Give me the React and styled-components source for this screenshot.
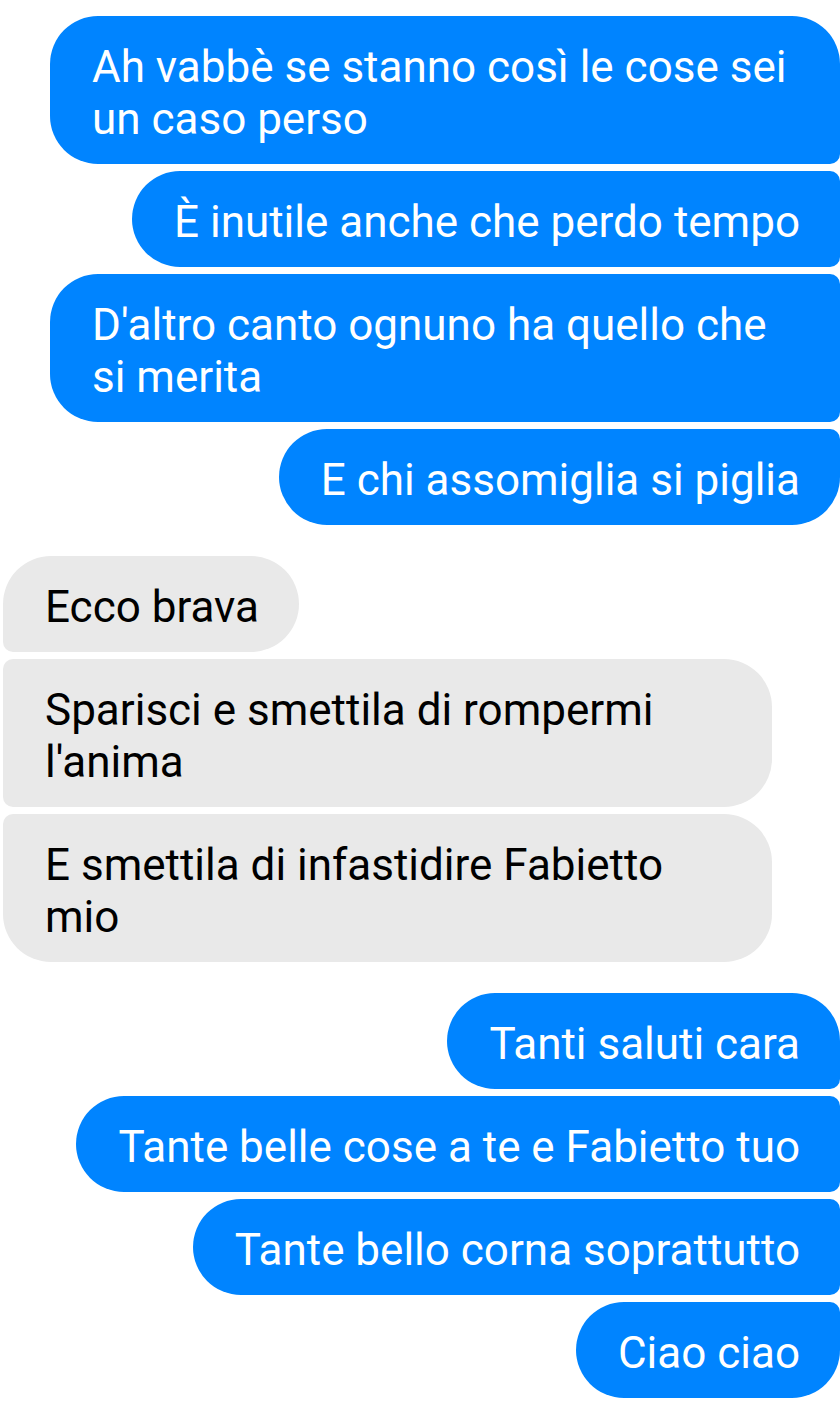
import React from 'react';
import styled, { createGlobalStyle, css } from 'styled-components';

const GlobalStyle = createGlobalStyle`
  html, body {
    margin: 0;
    padding: 0;
    background: #fff;
  }
  body {
    font-family: Roboto, 'Noto Sans', Arial, sans-serif;
  }
`;

const BIG = 48;
const SMALL = 10;

const groups = [
  {
    mine: true,
    messages: [
      'Ah vabbè se stanno così le cose sei un caso perso',
      'È inutile anche che perdo tempo',
      "D'altro canto ognuno ha quello che si merita",
      'E chi assomiglia si piglia',
    ],
  },
  {
    mine: false,
    messages: [
      'Ecco brava',
      "Sparisci e smettila di rompermi l'anima",
      'E smettila di infastidire Fabietto mio',
    ],
  },
  {
    mine: true,
    messages: [
      'Tanti saluti cara',
      'Tante belle cose a te e Fabietto tuo',
      'Tante bello corna soprattutto',
      'Ciao ciao',
    ],
  },
];

const App = () => {
  return (
    <>
      <GlobalStyle />
      <Thread>
        {groups.map((g, gi) => (
          <Group key={gi} $mine={g.mine}>
            {g.messages.map((m, i) => (
              <Bubble
                key={i}
                $mine={g.mine}
                $first={i === 0}
                $last={i === g.messages.length - 1}
              >
                {m}
              </Bubble>
            ))}
          </Group>
        ))}
      </Thread>
    </>
  );
};

export default App;

const Thread = styled.div`
  width: 840px;
  padding: 16px 0 22px;
  display: flex;
  flex-direction: column;
  gap: 31px;
`;

const Group = styled.div`
  display: flex;
  flex-direction: column;
  gap: 7px;
  align-items: ${(p) => (p.$mine ? 'flex-end' : 'flex-start')};
  padding-left: ${(p) => (p.$mine ? '0' : '3px')};
`;

const Bubble = styled.div`
  box-sizing: border-box;
  padding: 25px 40px 19px 42px;
  font-size: 44px;
  line-height: 52px;

  ${(p) =>
    p.$mine
      ? css`
          max-width: 790px;
          background: #0084ff;
          color: #fff;
          border-radius: ${BIG}px ${p.$first ? BIG : SMALL}px
            ${p.$last ? BIG : SMALL}px ${BIG}px;
        `
      : css`
          max-width: 769px;
          background: #e9e9e9;
          color: #000;
          border-radius: ${p.$first ? BIG : SMALL}px ${BIG}px ${BIG}px
            ${p.$last ? BIG : SMALL}px;
        `}
`;
